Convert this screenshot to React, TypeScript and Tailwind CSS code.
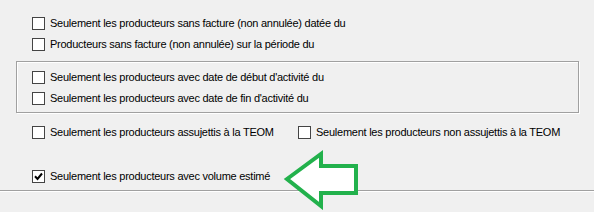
import React from 'react';

function CheckBox({ checked = false }: { checked?: boolean }) {
  return (
    <span className="w-[13px] h-[13px] bg-white border border-[#444444] flex items-center justify-center shrink-0">
      {checked && (
        <svg width="11" height="11" viewBox="0 0 11 11">
          <path d="M2 5.3 L4.5 8 L9 2.5" fill="none" stroke="#000" strokeWidth="2" />
        </svg>
      )}
    </span>
  );
}

function Option({ label, checked }: { label: string; checked?: boolean }) {
  return (
    <label className="flex items-center h-[13px] gap-[5px]">
      <CheckBox checked={checked} />
      <span className="text-[11px] leading-[13px] tracking-[-0.25px] text-black whitespace-nowrap">{label}</span>
    </label>
  );
}

export default function App() {
  return (
    <div
      className="relative w-[594px] h-[212px] bg-[#f0f0f0] overflow-hidden"
      style={{ fontFamily: '"Liberation Sans", Arial, sans-serif' }}
    >
      <div className="pt-[17px] pl-[32px] flex flex-col gap-[8px]">
        <Option label="Seulement les producteurs sans facture (non annulée) datée du" />
        <Option label="Producteurs sans facture (non annulée) sur la période du" />
      </div>

      <div className="ml-[16px] mt-[10px] w-[563px] border border-[#a0a0a0] shadow-[1px_1px_0_#ffffff,inset_1px_1px_0_#ffffff] pt-[9px] pb-[7px] pl-[15px] flex flex-col gap-[8px]">
        <Option label="Seulement les producteurs avec date de début d'activité du" />
        <Option label="Seulement les producteurs avec date de fin d'activité du" />
      </div>

      <div className="mt-[13px] pl-[32px] flex">
        <div className="w-[266px]">
          <Option label="Seulement les producteurs assujettis à la TEOM" />
        </div>
        <Option label="Seulement les producteurs non assujettis à la TEOM" />
      </div>

      <div className="mt-[31px] pl-[32px]">
        <Option label="Seulement les producteurs avec volume estimé" checked />
      </div>

      <div className="mt-[7px] h-px bg-[#a0a0a0] border-b border-white box-content" />

      {/* green annotation arrow */}
      <svg className="absolute left-[283px] top-[150px]" width="78" height="60" viewBox="0 0 78 60">
        <path
          d="M4 29 L38 4 L38 16 L73 16 L73 43 L38 43 L38 56 Z"
          fill="#ffffff"
          stroke="#22b14c"
          strokeWidth="4"
          strokeLinejoin="miter"
        />
      </svg>
    </div>
  );
}
